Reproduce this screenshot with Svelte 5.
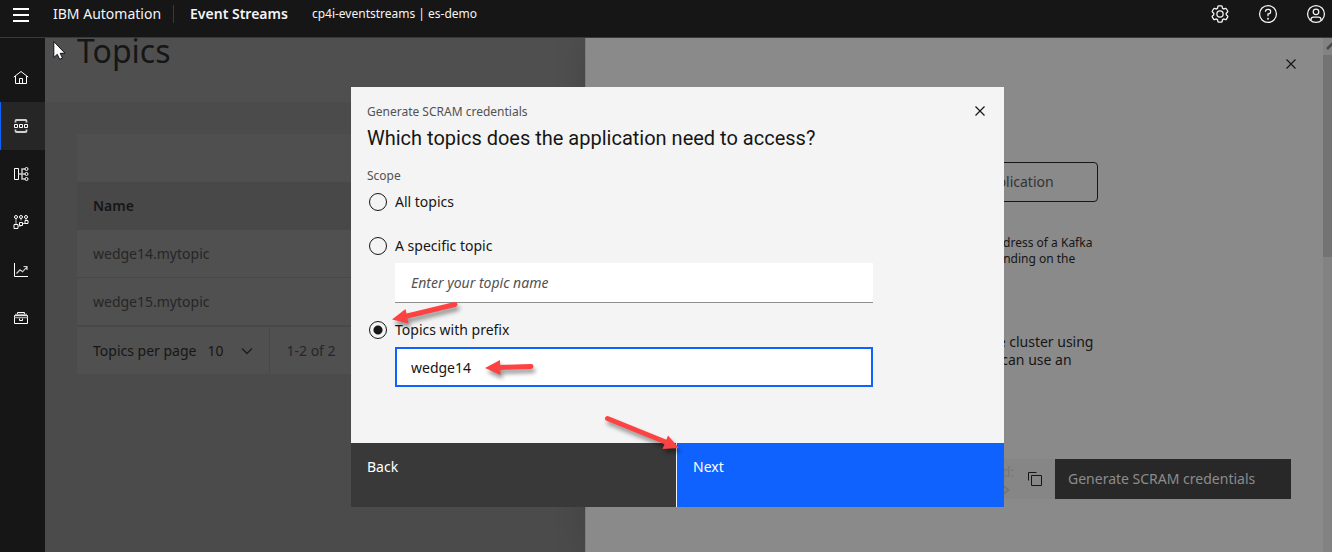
<script>
  let scope = $state('prefix');
  let topicName = $state('');
  let prefix = $state('wedge14');
  let perPage = $state('10');

  const topics = ['wedge14.mytopic', 'wedge15.mytopic'];
  const nav = ['Home', 'Topics', 'Schema registry', 'Consumer groups', 'Metrics', 'Toolbox'];
</script>

{#snippet closeIcon()}
  <svg class="icon16" viewBox="0 0 16 16" aria-hidden="true">
    <path d="M3.5 3.5l9 9M12.5 3.5l-9 9" fill="none" stroke="currentColor" stroke-width="1.2" />
  </svg>
{/snippet}

{#snippet navIcon(name)}
  <svg class="icon16" viewBox="0 0 16 16" fill="none" stroke="currentColor" stroke-width="1" aria-hidden="true">
    {#if name === 'Home'}
      <path d="M.8 7.1L8 1.5l7.2 5.6M2.5 6v7.5h11V6M6.5 13.5v-5h3v5" />
    {:else if name === 'Topics'}
      <path d="M2.500 4.500V3Q2.500 2 3.500 2h9Q13.500 2 13.500 3v1.500M2.500 11.500V13Q2.500 14 3.500 14h9Q13.500 14 13.500 13v-1.500" stroke-width="1.800" stroke="#d0d0d0" />
      <path d="M1.500 6.500h3v3h-3zM6.500 6.500h3v3h-3zM11.500 6.500h3v3h-3z" />
    {:else if name === 'Schema registry'}
      <path d="M1.500 2.500h4v11h-4z" />
      <path d="M5.500 8h6.500M12 3H9v10H12" stroke-width="1.500" stroke="#c6c6c6" />
      <circle cx="13.500" cy="3" r="1.500" fill="#161616" />
      <circle cx="13.500" cy="8" r="1.500" fill="#161616" />
      <circle cx="13.500" cy="13" r="1.500" fill="#161616" />
    {:else if name === 'Consumer groups'}
      <path d="M3 4.500v6M8 4.500v2M13 4.500v2M5.500 12H8M9.500 9.500H12" stroke="#c6c6c6" />
      <circle cx="3" cy="3" r="1.500" />
      <circle cx="8" cy="3" r="1.500" />
      <circle cx="13" cy="3" r="1.500" />
      <path d="M1 10.500h4v4H1zM6.500 8.500h3v3h-3zM12 6.500h3v3h-3z" />
    {:else if name === 'Metrics'}
      <path d="M1.500 1v13.500H15" />
      <path d="M3.500 11.500L7 7.800l2.500 2 4.500-5M10.500 4.500H14V8" stroke-width="1.200" stroke="#d0d0d0" />
    {:else}
      <path d="M4.500 4V2.500h7V4M1.500 5.500h13v8h-13zM6.500 8.500v2h3v-2" />
      <path d="M2 4.500h12M1.500 7.500H14.500" stroke-width="1.500" stroke="#a0a0a0" />
    {/if}
  </svg>
{/snippet}

<div class="shell">
  <header>
    <button class="menu" aria-label="Menu">
      <svg viewBox="0 0 16 14" width="16" height="14" aria-hidden="true">
        <path d="M0 1h16M0 7h16M0 13h16" stroke="#fff" stroke-width="2" />
      </svg>
    </button>
    <span class="brand">IBM Automation</span>
    <span class="product">Event Streams</span>
    <span class="instance">cp4i-eventstreams | es-demo</span>
    <div class="tools">
      <button aria-label="Settings">
        <svg viewBox="0 0 32 32" fill="#f4f4f4" aria-hidden="true">
          <path d="M27,16.76c0-.25,0-.5,0-.76s0-.51,0-.77l1.92-1.68A2,2,0,0,0,29.3,11L26.94,7a2,2,0,0,0-1.73-1,2,2,0,0,0-.64.1l-2.43.82a11.35,11.35,0,0,0-1.31-.75l-.51-2.52a2,2,0,0,0-2-1.61H13.64a2,2,0,0,0-2,1.61l-.51,2.52a11.48,11.48,0,0,0-1.32.75L7.43,6.06A2,2,0,0,0,6.79,6,2,2,0,0,0,5.06,7L2.7,11a2,2,0,0,0,.41,2.51L5,15.24c0,.25,0,.5,0,.76s0,.51,0,.77L3.11,18.45A2,2,0,0,0,2.7,21L5.06,25a2,2,0,0,0,1.73,1,2,2,0,0,0,.64-.1l2.43-.82a11.35,11.35,0,0,0,1.31.75l.51,2.52a2,2,0,0,0,2,1.61h4.72a2,2,0,0,0,2-1.61l.51-2.52a11.48,11.48,0,0,0,1.32-.75l2.42.82a2,2,0,0,0,.64.1,2,2,0,0,0,1.73-1L29.3,21a2,2,0,0,0-.41-2.51ZM25.21,24l-3.43-1.16a8.86,8.86,0,0,1-2.71,1.57L18.36,28H13.64l-.71-3.55a9.36,9.36,0,0,1-2.7-1.57L6.79,24,4.43,20l2.72-2.4a8.9,8.9,0,0,1,0-3.13L4.43,12,6.79,8l3.43,1.16a8.86,8.86,0,0,1,2.71-1.57L13.64,4h4.72l.71,3.55a9.36,9.36,0,0,1,2.7,1.57L25.21,8,27.57,12l-2.72,2.4a8.9,8.9,0,0,1,0,3.13L27.57,20Z" />
          <circle cx="16" cy="16" r="5" fill="none" stroke="#f4f4f4" stroke-width="2" />
        </svg>
      </button>
      <button aria-label="Help">
        <svg viewBox="0 0 32 32" fill="none" stroke="#f4f4f4" stroke-width="2" aria-hidden="true">
          <circle cx="16" cy="16" r="13.500" />
          <path d="M12 12.500V12a3.500 3.500 0 0 1 3.500-3.500h1.200a3.500 3.500 0 0 1 0 7.200H16v3.800" />
          <circle cx="16" cy="23.500" r="1.500" fill="#f4f4f4" stroke="none" />
        </svg>
      </button>
      <button aria-label="User profile">
        <svg viewBox="0 0 32 32" fill="none" stroke="#f4f4f4" stroke-width="2" aria-hidden="true">
          <circle cx="16" cy="16" r="13.500" />
          <circle cx="16" cy="12.500" r="4.500" />
          <path d="M8 26.500V25a4 4 0 0 1 4-4h8a4 4 0 0 1 4 4v1.500" />
        </svg>
      </button>
    </div>
  </header>

  <nav aria-label="Main">
    {#each nav as name}
      <a href="#main" class:active={name === 'Topics'} aria-label={name}>{@render navIcon(name)}</a>
    {/each}
  </nav>

  <main id="main">
    <div class="title"><h1>Topics</h1></div>
    <div class="listing">
      <div class="toolbar"></div>
      <table>
        <thead><tr><th scope="col">Name</th></tr></thead>
        <tbody>
          {#each topics as topic}
            <tr><td>{topic}</td></tr>
          {/each}
        </tbody>
      </table>
      <div class="pagination">
        <div class="size">
          <label for="per-page">Topics per page</label>
          <span class="picker">
            <select id="per-page" bind:value={perPage}>
              <option>10</option>
              <option>20</option>
            </select>
            <svg viewBox="0 0 12 8" width="12" height="8" aria-hidden="true">
              <path d="M1 1.500l5 5 5-5" fill="none" stroke="#1c1c1c" stroke-width="1.300" />
            </svg>
          </span>
        </div>
        <span class="range">1-2 of 2</span>
      </div>
    </div>
  </main>

  <aside>
    <div class="panel">
      <button class="panel-close" aria-label="Close panel">{@render closeIcon()}</button>
      <button class="sample">application</button>
      <p class="small">address of a Kafka<br />pending on the</p>
      <p class="body">he cluster using<br />u can use an</p>
      <div class="credentials">
        <div class="snippet">
          <span>d:</span>
          <svg viewBox="0 0 8 10" width="8" height="10" aria-hidden="true">
            <path d="M1.500 1l5 4-5 4" fill="none" stroke="currentColor" stroke-width="2" />
          </svg>
        </div>
        <button class="copy" aria-label="Copy">
          <svg viewBox="0 0 16 16" width="16" height="16" fill="none" stroke="#161616" aria-hidden="true">
            <path d="M4.500 4.500h10v10h-10zM1.500 9.500v-8h8" />
          </svg>
        </button>
        <button class="generate">Generate SCRAM credentials</button>
      </div>
    </div>
    <div class="scrollbar" aria-hidden="true">
      <svg viewBox="0 0 9 17" width="9" height="17">
        <path d="M4 11l6-6" fill="none" stroke="#484848" stroke-width="2.500" />
      </svg>
      <div class="thumb"></div>
    </div>
  </aside>
</div>

<div class="overlay">
  <div class="modal" role="dialog" aria-modal="true" aria-labelledby="modal-title">
    <div class="modal-body">
      <div class="modal-head">
        <div>
          <p class="caption">Generate SCRAM credentials</p>
          <h2 id="modal-title">Which topics does the application need to access?</h2>
        </div>
        <button class="modal-close" aria-label="Close">{@render closeIcon()}</button>
      </div>
      <fieldset>
        <legend class="caption">Scope</legend>
        <label class="choice"><input type="radio" name="scope" value="all" bind:group={scope} />All topics</label>
        <label class="choice spaced"><input type="radio" name="scope" value="topic" bind:group={scope} />A specific topic</label>
        <input class="field" type="text" aria-label="Topic name" placeholder="Enter your topic name" bind:value={topicName} />
        <label class="choice spaced"><input type="radio" name="scope" value="prefix" bind:group={scope} />Topics with prefix</label>
        <input class="field current" type="text" aria-label="Topic prefix" bind:value={prefix} />
      </fieldset>
    </div>
    <footer>
      <button class="back">Back</button>
      <button class="next">Next</button>
    </footer>
    <svg class="arrows" viewBox="0 0 653 420" aria-hidden="true">
      <g fill="#fc4242" stroke="#fc4242" stroke-linecap="round">
        <g stroke-width="5"><path d="M104 217.500L52 230M180 279.500l-34 1M256.500 331.500L317 356" /></g>
        <g stroke="none"><path d="M41 232.500l13.500-10.500 3 14.500zM134 281l15-8 .5 15zM328 361l-11-12.500-5.500 13.500z" /></g>
      </g>
    </svg>
  </div>
</div>

<svg class="cursor" viewBox="0 0 13 20" width="13" height="20" aria-hidden="true">
  <path d="M.8 1.500v16l3.500-3.200 2.300 5 2.900-1.200-2.300-4.800h4.800z" fill="#fff" stroke="#101018" stroke-width="1" />
</svg>

<style>
  :global(body) {
    background: #4b4b4b;
  }

  .shell,
  .overlay {
    font-family: 'Noto Sans', 'Open Sans', sans-serif;
    font-size: 14px;
    line-height: 18px;
    color: #161616;
  }

  .shell *,
  .overlay * {
    box-sizing: border-box;
  }

  button,
  input,
  select {
    font: inherit;
    color: inherit;
    margin: 0;
    padding: 0;
    border: 0;
    border-radius: 0;
    background: none;
  }

  h1,
  h2,
  p {
    margin: 0;
    font-weight: 400;
  }

  svg {
    display: block;
  }

  .icon16 {
    width: 16px;
    height: 16px;
  }

  .shell {
    display: grid;
    grid-template-columns: 45px 540fr 747fr;
    grid-template-rows: auto 1fr;
    min-height: 100vh;
  }

  header {
    grid-column: 1 / -1;
    display: flex;
    align-items: center;
    padding: 0 6px 9px 13px;
    border-bottom: 1px solid #393939;
    background: #161616;
    color: #f4f4f4;
  }

  header > * {
    line-height: 28px;
  }

  .menu {
    display: flex;
    align-items: center;
    height: 28px;
    margin-right: 24px;
    padding-top: 2px;
  }

  .product {
    margin-left: 12px;
    padding-left: 16px;
    border-left: 1px solid #393939;
    font-weight: 600;
    line-height: 18px;
  }

  .instance {
    margin-left: 24px;
    font-size: 12px;
  }

  .tools {
    display: flex;
    gap: 28px;
    margin-left: auto;
  }

  .tools button,
  .tools svg {
    width: 20px;
    height: 20px;
  }

  nav {
    padding-top: 16px;
    background: #161616;
    color: #fff;
  }

  nav a {
    display: flex;
    align-items: center;
    height: 48px;
    padding-left: 12px;
    border-left: 1px solid transparent;
    color: inherit;
  }

  nav a.active {
    border-left-color: #0f62fe;
    background: #262626;
  }

  main {
    background: #4b4b4b;
    min-width: 0;
  }

  .title {
    height: 64px;
    padding-left: 32px;
    background: #4f4f4f;
  }

  h1 {
    font-size: 32px;
    line-height: 26px;
  }

  .listing {
    margin: 32px 0 0 32px;
    background: #505050;
  }

  .toolbar {
    height: 48px;
    background: #4f4f4f;
  }

  table {
    width: 100%;
    border-collapse: collapse;
  }

  th,
  td {
    height: 48px;
    padding: 2px 16px 0;
    text-align: left;
    border-bottom: 1px solid #484848;
  }

  th {
    background: #484848;
    font-weight: 600;
    height: 47px;
  }

  td {
    color: #262626;
  }

  .pagination {
    display: flex;
    height: 48px;
    padding-top: 1px;
    border-top: 1px solid #484848;
  }

  .size {
    display: flex;
    align-items: center;
    padding: 0 16px;
    border-right: 1px solid #484848;
  }

  .picker {
    display: flex;
    align-items: center;
    gap: 16px;
    margin-left: 11px;
  }

  select {
    appearance: none;
    width: 18px;
  }

  .range {
    align-self: center;
    padding-left: 16px;
    color: #262626;
  }

  aside {
    position: relative;
    display: flex;
    justify-content: space-between;
    background: #8a8a8a;
    border-left: 1px solid #7c7c7c;
    box-shadow: 0 0 30px rgba(0, 0, 0, 0.15);
    clip-path: inset(0 0 0 -60px);
  }

  .panel {
    display: flex;
    flex-direction: column;
    align-items: flex-start;
    flex: 1;
    padding: 18px 32px 0 403px;
  }

  .panel-close {
    align-self: flex-end;
    margin-right: -8px;
  }

  .sample {
    height: 40px;
    margin: 90px 0 0 -16px;
    padding: 0 43px 0 7px;
    border: 1px solid #161616;
    border-radius: 4px;
    color: #333;
  }

  .small {
    margin-top: 33px;
    font-size: 12px;
    line-height: 16px;
  }

  .body {
    margin-top: 66px;
    white-space: nowrap;
  }

  .credentials {
    display: flex;
    align-items: center;
    align-self: stretch;
    height: 40px;
    margin-top: 90px;
    background: #868686;
  }

  .snippet {
    display: flex;
    flex-direction: column;
    gap: 4px;
    padding-left: 13px;
    color: #777;
  }

  .copy {
    margin: 0 12px 0 auto;
  }

  .generate {
    height: 40px;
    width: 236px;
    padding-left: 13px;
    background: #282828;
    color: #8c8c8c;
    text-align: left;
  }

  .scrollbar {
    width: 9px;
    background: #828282;
  }

  .thumb {
    height: 202px;
    background: #737373;
  }

  .overlay {
    position: fixed;
    inset: 0;
    display: flex;
    align-items: center;
    justify-content: center;
    padding: 42px 0 0 23px;
    box-sizing: border-box;
  }

  .modal {
    position: relative;
    width: 100%;
    max-width: 653px;
    background: #f4f4f4;
  }

  .modal-body {
    padding: 16px 16px 56px;
  }

  .modal-head {
    display: flex;
    justify-content: space-between;
    align-items: flex-start;
  }

  .caption {
    padding: 0;
    font-size: 12px;
    line-height: 18px;
    color: #525252;
  }

  h2 {
    margin-top: 4px;
    font-family: Roboto, sans-serif;
    font-size: 20px;
    line-height: 26px;
  }

  .modal-close {
    width: 16px;
    height: 16px;
  }

  fieldset {
    margin: 16px 0 0;
    padding: 0;
    border: 0;
  }

  .choice {
    display: flex;
    align-items: center;
    gap: 8px;
    height: 20px;
    margin: 7px 0 0 2px;
  }

  .choice.spaced {
    margin-top: 24px;
  }

  .choice input {
    appearance: none;
    flex: none;
    width: 18px;
    height: 18px;
    border: 1px solid #161616;
    border-radius: 50%;
  }

  .choice input:checked {
    background: radial-gradient(circle, #161616 4px, transparent 5px);
  }

  .field {
    display: block;
    width: calc(100% - 143px);
    height: 40px;
    margin: 7px 0 0 28px;
    padding: 0 16px;
    border-bottom: 1px solid #8d8d8d;
    background: #fff;
    outline: none;
  }

  .field + .spaced {
    margin-top: 17px;
  }

  .field::placeholder {
    color: #525252;
    opacity: 1;
    font-style: italic;
  }

  .field.current {
    padding: 0 14px;
    border: 2px solid #0f62fe;
  }

  footer {
    display: grid;
    grid-template-columns: 325fr 327fr;
    gap: 1px;
    height: 64px;
  }

  footer button {
    padding: 15px 16px 0;
    display: flex;
    align-items: flex-start;
    color: #fff;
  }

  .back {
    background: #393939;
  }

  .next {
    background: #0f62fe;
  }

  .arrows {
    position: absolute;
    inset: 0;
    width: 100%;
    height: 100%;
    pointer-events: none;
    filter: drop-shadow(2px 4px 2px rgba(0, 0, 0, 0.4));
  }

  .cursor {
    position: fixed;
    left: 53px;
    top: 40px;
  }
</style>
